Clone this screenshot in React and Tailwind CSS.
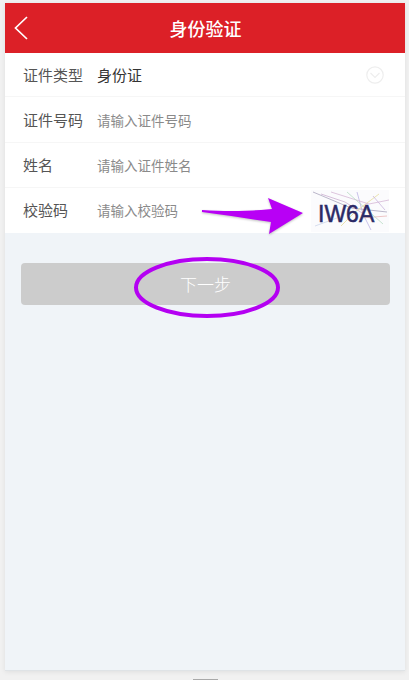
import React from 'react';

const rows = [
    { label: '证件类型', value: '身份证', h: 'h-[44px] pt-[2px]' },
    { label: '证件号码', hint: '请输入证件号码', h: 'h-[46px] pt-[2px]' },
    { label: '姓名', hint: '请输入证件姓名', h: 'h-[45px]' },
];

const Captcha = () => (
    <div className="relative w-[78px] h-[42px] bg-[#fbfbfd] flex items-center overflow-hidden">
        <svg className="absolute inset-0" width="78" height="42" viewBox="0 0 78 42" fill="none" strokeWidth="0.8">
            <path d="M2 2 L40 18 L76 22" stroke="#a9a4bd" />
            <path d="M10 4 L34 12 L62 30" stroke="#cdb0d2" />
            <path d="M46 2 L52 24 L60 40" stroke="#bdb4e4" />
            <path d="M68 4 L44 22 L30 36" stroke="#e6dd9c" />
            <path d="M20 2 L58 14 L78 10" stroke="#d6b8d6" />
            <path d="M50 28 L76 26" stroke="#e8b8b8" />
            <path d="M4 36 L26 28" stroke="#cdd6ea" />
            <path d="M36 2 L72 34" stroke="#b9dcc4" />
            <path d="M62 6 L74 20" stroke="#c9b4dc" />
        </svg>
        <span className="relative mt-[7px] ml-[7px] font-['Liberation_Sans',sans-serif] text-[23px] leading-none text-[#2b2a66] [-webkit-text-stroke:0.5px_#2b2a66]">IW6A</span>
    </div>
);

const App = () => {
    return (
        <div className="relative w-[409px] h-[680px] overflow-hidden bg-[#f1f1f1] pt-[3px] font-['Noto_Sans_CJK_SC','Noto_Sans',sans-serif]">
            <div className="mx-[5px] w-[400px] h-[668px] bg-[#f0f4f8] border-b border-[#dfe3e6] shadow-[0_1px_5px_rgba(0,0,0,0.08)]">
                <header className="relative flex items-center justify-center h-[50px] bg-[#dc2027]">
                    <svg className="absolute left-[8px] top-[12px]" width="16" height="26" viewBox="0 0 16 26" fill="none" stroke="#ffffff" strokeWidth="1.7">
                        <path d="M14 2 L2.5 13 L14 24" />
                    </svg>
                    <h1 className="text-[18px] font-medium text-white leading-none ml-[1px]">身份验证</h1>
                </header>

                <div className="bg-white">
                    {rows.map((row) => (
                        <div key={row.label} className={`flex items-center pl-[18px] pr-[21px] border-b border-[#f6f6f6] ${row.h}`}>
                            <span className="w-[74px] text-[15px] text-[#555555]">{row.label}</span>
                            {row.value ? (
                                <span className="flex-1 text-[15px] text-[#333333]">{row.value}</span>
                            ) : (
                                <span className="flex-1 text-[13.5px] text-[#8a8a8a]">{row.hint}</span>
                            )}
                            {row.value && (
                                <svg className="mb-[2px]" width="18" height="18" viewBox="0 0 18 18" fill="none" stroke="#eeeeee" strokeWidth="1.2">
                                    <circle cx="9" cy="9" r="8.2" />
                                    <path d="M4.5 7 L9 11.5 L13.5 7" />
                                </svg>
                            )}
                        </div>
                    ))}
                    <div className="flex items-center h-[45px] pl-[18px] pr-[16px]">
                        <span className="w-[74px] text-[15px] text-[#555555]">校验码</span>
                        <span className="flex-1 text-[13.5px] text-[#8a8a8a]">请输入校验码</span>
                        <Captcha />
                    </div>
                </div>

                <div className="pl-[16px] pr-[15px] pt-[30px]">
                    <button className="w-full h-[42px] rounded-[4px] bg-[#cccccc] text-[17px] font-light text-white">下一步</button>
                </div>
            </div>

            <div className="absolute left-[193px] top-[679px] w-[25px] h-px bg-[#a9a9a9]" />

            {/* Annotations drawn over the form */}
            <svg className="absolute left-[195px] top-[190px] drop-shadow-[0_1px_1px_rgba(0,0,0,0.25)]" width="112" height="50" viewBox="0 0 112 50">
                <path d="M7 20 C35 22 55 21 77 19 L73 8 L108 23 L74 44 L76 32 C55 29 30 25 7 22 Z" fill="#b800f5" />
            </svg>
            <svg className="absolute left-[130px] top-[252px]" width="154" height="70" viewBox="0 0 154 70" fill="none">
                <ellipse cx="77" cy="35.5" rx="71" ry="28.5" stroke="#b400f2" strokeWidth="4" />
            </svg>
        </div>
    );
};

export default App;
